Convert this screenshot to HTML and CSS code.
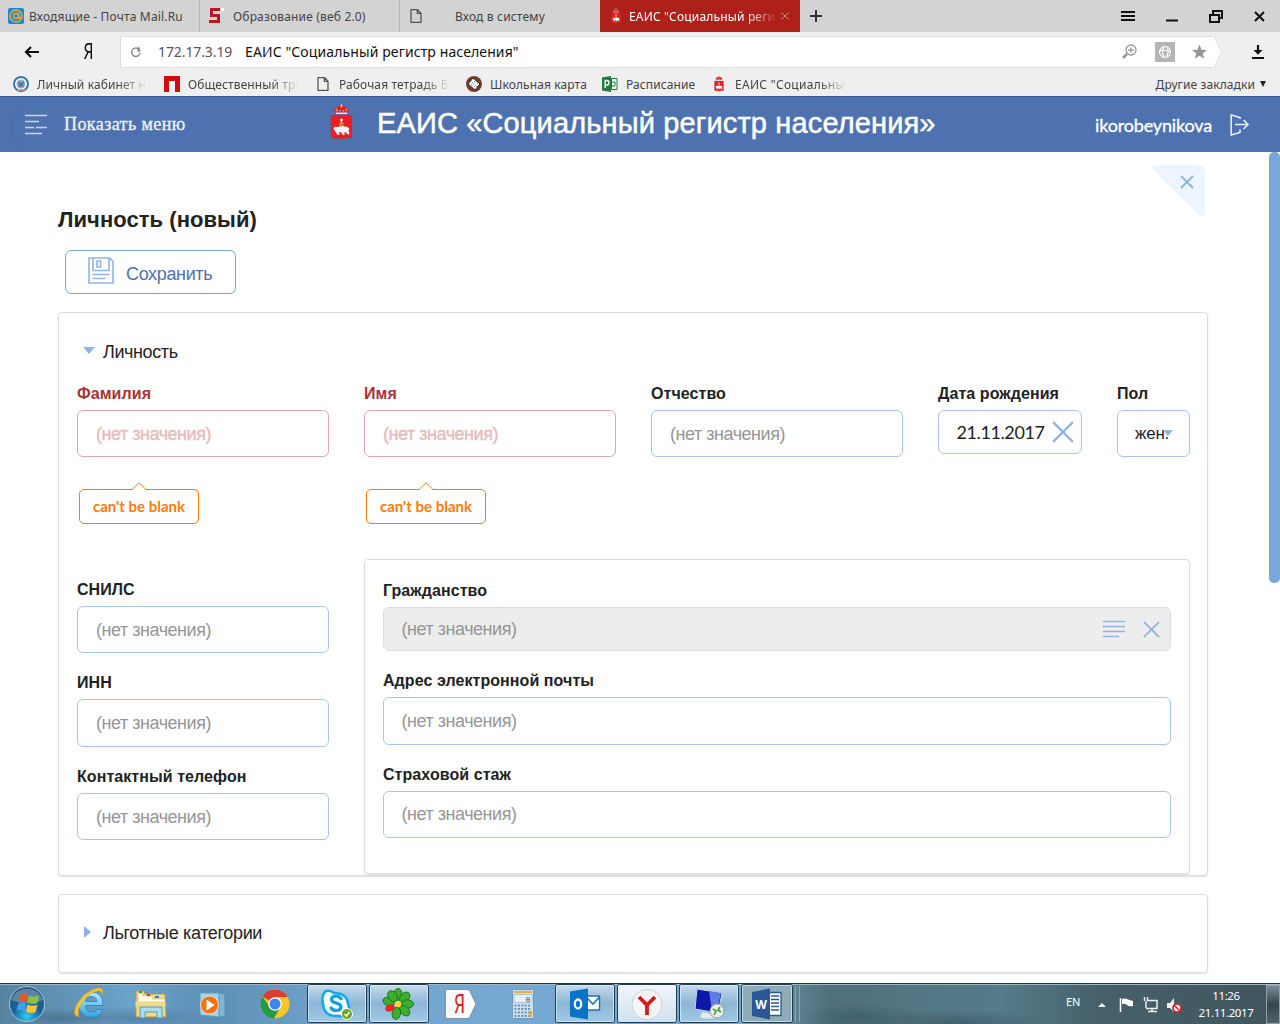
FILE: index.html
```html
<!DOCTYPE html>
<html lang="ru">
<head>
<meta charset="utf-8">
<title>ЕАИС "Социальный регистр населения"</title>
<link rel="stylesheet" href="styles.css">
</head>
<body>
<svg class="defs" width="0" height="0">
  <defs>
    <symbol id="crest" viewBox="0 0 24 36">
      <path d="M2 11h20v21q0 1-1 1h-7l-2 2-2-2H3q-1 0-1-1z" fill="#ec1c24" stroke="#b3373c" stroke-width=".7"/>
      <path d="M6 9 4.500 5 8 3l4-2 4 2 3.500 2L18 9z" fill="#cf2630"/>
      <path d="M12 0v4M10.500 1.500h3M6 5.500l2-1M18 5.500l-2-1" stroke="#eab64a" fill="none"/>
      <path d="M6.500 8.300h11v1.500h-11z" fill="#eee"/><path d="M7 6.500h10" stroke="#f3d7c8" stroke-dasharray="1.500 1.500"/>
      <path d="M10 18h4v4.500h-4z" fill="#c98b1e"/><path d="M12 14v4M10.500 15.500h3" stroke="#fff" stroke-width="1.200"/>
      <path d="M4 23.500q1.500-1.800 3.500-1.200 4-.8 8-.4 3 0 4 2l-.5 2 .8 3.600h-2.300l-1-2-2 .3.800 2h-2.500l-1-2.300h-2.300l.7 2.300H7.800l-1.500-2.500z" fill="#f7f7f7"/>
    </symbol>
    <symbol id="page" viewBox="0 0 12 14"><path d="M1 .7h6.500L11 4.200v9.100H1zM7.300.7v3.700H11" fill="none" stroke="#555" stroke-width="1.300"/></symbol>
    <symbol id="cross" viewBox="0 0 20 20"><path d="M1 1l18 18M19 1 1 19" fill="none" stroke="currentColor" stroke-width="2"/></symbol>
  </defs>
</svg>
<div class="screen">
  <nav class="tabs">
    <div class="tab"><svg class="fav" viewBox="0 0 16 16"><rect width="16" height="16" rx="2" fill="#1589e0"/><circle cx="8" cy="8" r="6" fill="none" stroke="#f6a623" stroke-width="1.600"/><circle cx="8" cy="8" r="2.600" fill="none" stroke="#f6a623" stroke-width="1.600"/><path d="M10.600 5v4.500q1.500 1.500 2.800-.5" fill="none" stroke="#f6a623" stroke-width="1.400"/></svg><span class="t-mail">Входящие - Почта Mail.Ru</span></div>
    <div class="tab"><svg class="fav" viewBox="0 0 16 16"><path d="M2 0h10v3H5v3h7v9H1v-3h8V9H2z" fill="#b3191f"/><path d="M13 0h3v3h-3z" fill="#fff"/></svg><span class="t-edu">Образование (веб 2.0)</span></div>
    <div class="tab"><svg class="fav pg"><use href="#page"/></svg><span class="t-login">Вход в систему</span></div>
    <div class="tab active"><svg class="fav crest-s"><use href="#crest"/></svg><span class="t-eais fade">ЕАИС "Социальный реги</span><svg class="tx"><use href="#cross"/></svg></div>
    <svg class="plus" viewBox="0 0 12 12"><path d="M6 0v12M0 6h12" stroke="#333" stroke-width="2"/></svg>
    <svg class="winctl" viewBox="0 0 142 16"><g fill="none" stroke="#111" stroke-width="2"><path d="M0 4h14M0 8h14M0 12h14"/><path d="M45 12.500h12"/><path d="M89 7h9v7h-9zM92 6V3h9v7h-3"/><path d="M134 4l9 9M143 4l-9 9"/></g></svg>
  </nav>
  <div class="address">
    <svg class="back" viewBox="0 0 15 12"><path d="M15 6H2M7 1 2 6l5 5" fill="none" stroke="#111" stroke-width="2.200"/></svg>
    <span class="ya">Я</span>
    <div class="urlbox">
      <svg class="reload" viewBox="0 0 12 12"><path d="M8.500 3A4.200 4.200 0 1 0 10 7" fill="none" stroke="#888" stroke-width="1.400"/><path d="M7 5.500h4L8.500 0z" fill="#888"/></svg>
      <span class="ip">172.17.3.19</span><span class="ttl">ЕАИС "Социальный регистр населения"</span>
      <svg class="urlicons" viewBox="0 0 86 22"><g fill="none" stroke="#999" stroke-width="1.300"><circle cx="9" cy="9" r="5"/><path d="M6.200 9h5.600M9 6.200v5.600"/><path d="M5 13l-4 4" stroke-width="2.500"/></g><rect x="33" y="1" width="20" height="20" fill="#b5b5b5"/><g fill="none" stroke="#fff" stroke-width="1.100"><circle cx="43" cy="11" r="5.500"/><path d="M37.500 10q5-2 11 1M42 5.500q-3 5 0 11M45 6q3 5-1 10"/></g><path d="M77.500 3.500l2 5.300 5.500.2-4.300 3.500 1.500 5.300-4.700-3-4.700 3 1.500-5.300L70 9l5.500-.2z" fill="#959595"/></svg>
    </div>
    <svg class="urltip" viewBox="0 0 10 32"><path d="M0 0h1l8 16-8 16H0z" fill="#fff"/><path d="M1 .5 8.500 16 1 31.500" fill="none" stroke="#ddd"/></svg>
    <svg class="down" viewBox="0 0 12 14"><path d="M6 0v6" stroke="#111" stroke-width="2.200"/><path d="M1.500 5h9L6 9.800zM0 12h12v2H0z" fill="#111"/></svg>
  </div>
  <div class="marks">
    <div class="mk m1"><svg class="fav" viewBox="0 0 16 16"><circle cx="8" cy="8" r="7" fill="#fff" stroke="#3974ad" stroke-width="2"/><circle cx="8" cy="8" r="4.500" fill="#91aecb"/><path d="M5 5l3 2 3-2-1 6H6z" fill="#55779c"/><path d="M4 14h8" stroke="#d88" stroke-width="1.500"/></svg><span class="fade">Личный кабинет н</span></div>
    <div class="mk m2"><svg class="fav" viewBox="0 0 16 16"><path d="M0 0h16v16h-5V5H5v11H0z" fill="#d00d12"/></svg><span class="fade">Общественный тра</span></div>
    <div class="mk m3"><svg class="fav pg"><use href="#page"/></svg><span class="fade">Рабочая тетрадь Би</span></div>
    <div class="mk m4"><svg class="fav" viewBox="0 0 16 16"><circle cx="8" cy="8" r="8" fill="#7b3b31"/><path d="M7 2l7 6-5 6-7-6z" fill="#fff" stroke="#222"/><path d="M6 6l5 5M5 8l4 3M8 5l4 3" stroke="#555" stroke-width=".8" stroke-dasharray="1 1"/></svg><span>Школьная карта</span></div>
    <div class="mk m5"><svg class="fav" viewBox="0 0 16 16"><path d="M0 1.500 9 0v16l-9-1.500z" fill="#217a3a"/><path d="M9.500 2.500h5.500v11H9.500zM10 6h3v4h-3" fill="#fff" stroke="#217a3a"/><path d="M3.200 12V4.500H5q2 0 2 2.200T5 9H3.200" fill="none" stroke="#fff" stroke-width="1.400"/></svg><span>Расписание</span></div>
    <div class="mk m6"><svg class="fav crest-s"><use href="#crest"/></svg><span class="fade">ЕАИС "Социальны</span></div>
    <div class="mk m7"><span>Другие закладки</span><i class="tri"></i></div>
  </div>
  <header class="top">
    <svg class="burger" viewBox="0 0 40 40"><path d="M14 1Q1 9 1 20t13 19" fill="none" stroke="#476aa6"/><g stroke="#c9d5ea" stroke-width="1.500"><path d="M15 9.500h22M15 15.500h14M15 21.500h9M26 21.500h11M15 27.500h17"/></g></svg>
    <span class="show">Показать меню</span>
    <svg class="crest"><use href="#crest"/></svg>
    <h1>ЕАИС «Социальный регистр населения»</h1>
    <span class="user">ikorobeynikova</span>
    <svg class="exit" viewBox="0 0 20 22"><path d="M10 5V3.500L1.200 1v20L10 18.500V15.500M5 10.500h13M13.500 6l4.500 4.500-4.500 4.500" fill="none" stroke="#e8eefa" stroke-width="1.600"/></svg>
  </header>
  <main class="content">
    <svg class="corner" viewBox="0 0 54 52"><path d="M3 0h42q8 0 8 8v40q-1 5-5 3L1 5Q-1 1 3 0z" fill="#eff5fe"/><path d="M29 11l12 12M41 11 29 23" stroke="#8db4e2" stroke-width="1.800"/></svg>
    <div class="scroll"></div>
    <h2>Личность (новый)</h2>
    <button class="save"><svg viewBox="0 0 26 27"><g fill="none" stroke="#8fb5e2" stroke-width="1.600"><path d="M1 1h20.500L25 4.500V26H1zM5 1v12.500h16V1M9 4h3.500v6H9zM4.500 17.500h17M4.500 21.500h13"/></g></svg><span>Сохранить</span></button>
    <section class="card person">
      <div class="chead"><i class="open"></i><span>Личность</span></div>
      <div class="row1">
        <div class="field bad w252"><label>Фамилия</label><div class="inp"><span>(нет значения)</span></div><div class="tip"><svg viewBox="0 0 14 8"><path d="M0 8 7 1l7 7z" fill="#fff"/><path d="M0 7.500 7 .8l7 6.700" fill="none" stroke="#ff7b0a"/></svg><span>can't be blank</span></div></div>
        <div class="field bad w252"><label>Имя</label><div class="inp"><span>(нет значения)</span></div><div class="tip"><svg viewBox="0 0 14 8"><path d="M0 8 7 1l7 7z" fill="#fff"/><path d="M0 7.500 7 .8l7 6.700" fill="none" stroke="#ff7b0a"/></svg><span>can't be blank</span></div></div>
        <div class="field w252"><label>Отчество</label><div class="inp"><span>(нет значения)</span></div></div>
        <div class="field date"><label>Дата рождения</label><div class="inp"><span>21.11.2017</span><svg><use href="#cross"/></svg></div></div>
        <div class="field sex"><label>Пол</label><div class="inp"><span>жен.</span><i class="open"></i></div></div>
      </div>
      <div class="row2">
        <div class="left">
          <div class="field"><label>СНИЛС</label><div class="inp"><span>(нет значения)</span></div></div>
          <div class="field"><label>ИНН</label><div class="inp inn"><span>(нет значения)</span></div></div>
          <div class="field"><label>Контактный телефон</label><div class="inp"><span>(нет значения)</span></div></div>
        </div>
        <div class="card inner">
          <div class="field"><label>Гражданство</label><div class="inp gray"><span>(нет значения)</span><svg class="lines" viewBox="0 0 22 18"><path d="M0 1.500h22M0 6.500h22M0 11.500h22M0 16.500h16" stroke="#8fb5e2" stroke-width="1.500"/></svg><svg class="x"><use href="#cross"/></svg></div></div>
          <div class="field f-mail"><label>Адрес электронной почты</label><div class="inp"><span>(нет значения)</span></div></div>
          <div class="field"><label>Страховой стаж</label><div class="inp"><span>(нет значения)</span></div></div>
        </div>
      </div>
    </section>
    <section class="card benefits"><i class="shut"></i><span>Льготные категории</span></section>
  </main>
  <footer class="task">
    <svg class="apps" viewBox="0 0 800 41">
      <defs>
        <radialGradient id="orb" cx=".5" cy=".85" r=".8"><stop offset="0" stop-color="#35c8f4"/><stop offset=".5" stop-color="#15629a"/><stop offset="1" stop-color="#2b587d"/></radialGradient>
        <linearGradient id="btn" x2="0" y2="1"><stop offset="0" stop-color="#c6dcec"/><stop offset=".5" stop-color="#8db6d6"/><stop offset="1" stop-color="#a1cae6"/></linearGradient>
        <linearGradient id="hot" x2="0" y2="1"><stop offset="0" stop-color="#f1f6fa"/><stop offset="1" stop-color="#cfe2f0"/></linearGradient>
        <linearGradient id="ie" x2="0" y2="1"><stop offset="0" stop-color="#b4ecfc"/><stop offset="1" stop-color="#2fa4e6"/></linearGradient>
      </defs>
      <circle cx="27" cy="21" r="17.500" fill="url(#orb)" stroke="#a9c8da"/><path d="M11 17a17 17 0 0 1 32 0q-16 7-32 0z" fill="#fff" opacity=".25"/>
      <path d="M20 12q4-3 8 0l-1.500 7q-4-2.500-8 0z" fill="#e4592a"/><path d="M29 12.500q5 2.500 10 0L37.500 20q-5 2-10-.5z" fill="#8fc43a"/><path d="M18 21q4-2.500 8 0l-1.500 7q-4-2.500-8 0z" fill="#3fa2e4"/><path d="M27.500 21.500q5 2.500 10 0L35.500 29q-5 2-9.500-.5z" fill="#fbc52e"/>
      <path d="M103 22.500H85.500q.5 6.500 6.500 6.500 3.500 0 5-2.500h5.800Q100 34.500 92 34.500 79 34 79 21.500 80 9 91.500 9 103.500 9.500 103 22.500zM85.500 18.500h11.500q-.5-5-5.700-5t-5.800 5z" fill="url(#ie)" fill-rule="evenodd" stroke="#2583bb" stroke-width=".8"/><path d="M79 34q-7-1-3-11 5-10 14-15t12-2q2 2 0 6 0-5-4-4-7 1-14 9-8 11-5 17z" fill="#f5c431" stroke="#c9941c" stroke-width=".4"/>
      <path d="M136 8h8l1 3h20l1 23h-30z" fill="#f2d985" stroke="#b99743"/><path d="M138 10h4l1 3h9l1 3h12v3h-27z" fill="#fffbea" stroke="#c5aa61" stroke-width=".5"/><path d="M139 8h3v2h-3z" fill="#25a12a"/><path d="M147 11h3v2h-3z" fill="#d13c28"/><path d="M155 13h4v2h-4z" fill="#178ad3"/><path d="M135.500 19h30v5h-30z" fill="#f2d985"/><path d="M140 35V24h22v11h-5v-6h-12v6z" fill="#a9dcee" stroke="#4d9dbb"/>
      <path d="M214 10h6l5 1v22l-8 2z" fill="#7eb6d5" stroke="#4d8fb5"/><path d="M200 10h19v24l-19-2z" fill="#abd1e5" stroke="#5d9cbe"/><circle cx="209.500" cy="22" r="9" fill="#f17315" stroke="#eed9c8"/><path d="M206.500 16.500 214.500 22l-8 5.500z" fill="#fff"/>
      <circle cx="275" cy="21" r="14.500" fill="#f8c82b"/><path d="M275 21 262.400 13.500A14.500 14.500 0 0 1 287.600 14H275z" fill="#da3e30"/><path d="M262.400 13.500A14.500 14.500 0 0 0 274 35.500l6-11-8 2z" fill="#24994a"/><circle cx="275" cy="21" r="6.800" fill="#fff"/><circle cx="275" cy="21" r="5.500" fill="#4285f0"/>
      <g stroke="#233d50"><rect x="307.500" y="1.500" width="59" height="38" rx="2" fill="url(#btn)"/><rect x="369.500" y="1.500" width="59" height="38" rx="2" fill="url(#btn)"/><rect x="555.500" y="1.500" width="59" height="38" rx="2" fill="url(#btn)"/><rect x="617.500" y="1.500" width="59" height="38" rx="2" fill="url(#hot)"/><rect x="679.500" y="1.500" width="59" height="38" rx="2" fill="url(#btn)"/><rect x="741.500" y="1.500" width="51" height="38" rx="2" fill="#8fadb9"/></g>
      <g fill="none" stroke="#e2f0f8" opacity=".7"><rect x="308.500" y="2.500" width="57" height="36" rx="1"/><rect x="370.500" y="2.500" width="57" height="36" rx="1"/><rect x="556.500" y="2.500" width="57" height="36" rx="1"/><rect x="680.500" y="2.500" width="57" height="36" rx="1"/><rect x="742.500" y="2.500" width="49" height="36" rx="1"/><path d="M795.500 3v36M799.500 3v36" opacity=".5"/></g>
      <path d="M326 8q5-1 8 2 13 0 14 11 2 4 0 7-3 7-9 5-15 1-16-12-2-9 3-13z" fill="#f7fcff" stroke="#10a8ee" stroke-width="2.600"/><path d="M341.500 17q-1.500-4-5.500-4t-4.500 3.300q0 2.700 4.500 3.700t5 3.700q0 3.800-5 3.800-4 0-5.500-3.700" fill="none" stroke="#109fdf" stroke-width="3.200"/><circle cx="347" cy="31" r="5.500" fill="#6ea617" stroke="#fff"/><path d="M344.500 31l2 2 3-4" stroke="#fff" fill="none" stroke-width="1.500"/>
      <g fill="#3bb02c" stroke="#16631b" stroke-width=".8"><ellipse id="petal" cx="398" cy="11.500" rx="4.200" ry="6"/><use href="#petal" transform="rotate(45 398 21)"/><use href="#petal" transform="rotate(90 398 21)"/><use href="#petal" transform="rotate(135 398 21)"/><use href="#petal" transform="rotate(190 398 21)"/><use href="#petal" transform="rotate(285 398 21)"/><use href="#petal" transform="rotate(325 398 21)"/></g><ellipse cx="390" cy="25" rx="4.800" ry="3.500" fill="#e52720" transform="rotate(-20 390 25)"/><circle cx="398" cy="21" r="3.300" fill="#fcd532"/>
      <path d="M447 6.500h20q2 0 3 2L476 21l-6 12.500q-1 2-3 2h-20q-1.500 0-1.500-1.500V8q0-1.500 1.500-1.500z" fill="#fafafa" stroke="#8095a3"/>
      <rect x="512.500" y="6.500" width="21" height="29" rx="1" fill="#cfe2ef" stroke="#6c9abc"/><path d="M514 8h18v2h-18z" fill="#f1a845"/><path d="M514 11.500h18v8h-18z" fill="#e6eff4" stroke="#8ba8bc" stroke-width=".6"/><path d="M514.500 22.500h16M514.500 26h16M514.500 29.500h16M514.500 33h16" stroke="#688fae" stroke-width="2" stroke-dasharray="2 1.400"/><path d="M529 28h3v6h-3z" fill="#f2a434"/>
      <path d="M586 13h13.500v14H586z" fill="#fff" stroke="#2272b9" stroke-width="1.400"/><path d="M586 14l7 7 6.500-7" fill="none" stroke="#2272b9" stroke-width="1.600"/><path d="M570 8.500l18-3v31l-18-3z" fill="#0873c7"/><ellipse cx="578" cy="21" rx="3.200" ry="4.500" fill="none" stroke="#fff" stroke-width="2.300"/>
      <circle cx="647" cy="21.500" r="15" fill="#f4f4f4" stroke="#ccd1d5"/><path d="M639 14l8 8 8-8M647 22v10" fill="none" stroke="#d7191f" stroke-width="3.800"/>
      <path d="M702 29l10 2 2 4q-8 2-14-1z" fill="#e6e9eb"/><path d="M697 6l25 4-4 20-23-4z" fill="#0b18a8" stroke="#cad2e0"/><path d="M709 8l12 2-4 19-5-1z" fill="#5e7ee2"/><circle cx="717" cy="28" r="7" fill="#eceeed" stroke="#999"/><path d="M713 26l3 2-2 4M720 24l-2 3 3 2" stroke="#36a32d" stroke-width="1.600" fill="none"/>
      <path d="M768 9.500h13v23h-13z" fill="#fff" stroke="#2b5797" stroke-width="1.300"/><path d="M771 13h8M771 16.500h8M771 20h8M771 23.500h8M771 27h8" stroke="#2b5797" stroke-width="1.500"/><path d="M752 9l18-3.500v31L752 33z" fill="#2b5797"/>
      <text x="761" y="26" text-anchor="middle" fill="#fff" font-family="Open Sans, sans-serif" font-weight="700" font-size="12">W</text>
      <text x="459.500" y="30" text-anchor="middle" fill="#d61d23" font-family="Roboto, sans-serif" font-size="26" textLength="11" lengthAdjust="spacingAndGlyphs">Я</text>
      <text x="528" y="18.500" text-anchor="middle" fill="#345" font-family="Liberation Mono, monospace" font-size="8">0</text>
    </svg>
    <span class="en">EN</span>
    <svg class="tray" viewBox="0 0 90 20"><path d="M2 12l4-4 4 4z" fill="#eee"/><path d="M24.500 3v14" stroke="#fff" stroke-width="1.500"/><path d="M26 4q3-1 5 0t6 2v5q-4 1-6-1t-5-1z" fill="#fff"/><path d="M51 5.500h10v8H50M56 13v3M52 16.500h9M48.500 2v4M51.500 2v4M50 6v7" fill="none" stroke="#eee" stroke-width="1.500"/><path d="M71 8h3l4-5v14l-4-4h-3z" fill="#eee"/><circle cx="81" cy="13" r="4" fill="#fff" stroke="#e4202c" stroke-width="1.700"/><path d="M78 10l6 6" stroke="#e4202c" stroke-width="1.600"/></svg>
    <div class="clock"><span>11:26</span><span>21.11.2017</span></div>
    <div class="peek"></div>
  </footer>
</div>
</body>
</html>
```
FILE: styles.css
```css
* { box-sizing: border-box; }
body { margin: 0; font-family: "Liberation Sans", Arial, sans-serif; color: #222; overflow: hidden; }
.defs { position: absolute; }
.screen { width: 1280px; height: 1024px; display: flex; flex-direction: column; background: #fff; white-space: nowrap; }
svg { display: block; flex: none; }
.tabs, .address, .marks, .task { font-family: "Noto Sans", "Open Sans", sans-serif; font-size: 12px; color: #444; }

.tabs { height: 32px; background: #d3d3d3; display: flex; align-items: center; flex: none; }
.tab { width: 200px; height: 32px; display: flex; align-items: center; padding-left: 8px; border-right: 1px solid #b5b5b5; }
.tab span { margin-left: 5px; letter-spacing: .17px; }
.tab:nth-child(3) { border-right: 0; }
.tab.active { background: #ae211b; color: #fff; border: 0; }
.fav { width: 16px; height: 16px; }
.fav.pg { width: 16px; height: 14px; }
.tab .t-edu { margin-left: 9px; }
.tab .t-login { margin-left: 31px; }
.tab .t-eais { margin-left: 5px; width: 148px; overflow: hidden; }
.fade { -webkit-mask-image: linear-gradient(90deg, #000 calc(100% - 28px), transparent); mask-image: linear-gradient(90deg, #000 calc(100% - 28px), transparent); overflow: hidden; }
.tx { width: 8px; height: 8px; margin-left: 4px; color: #e0a4a1; }
.plus { width: 12px; height: 12px; margin-left: 10px; }
.winctl { width: 142px; height: 16px; margin-left: auto; margin-right: 17px; overflow: visible; }

.address { height: 40px; background: #efefef; display: flex; align-items: center; flex: none; }
.back { width: 15px; height: 12px; margin-left: 24px; }
.ya { width: 12px; margin: -3px 0 0 43px; font-size: 21px; color: #111; transform: scaleX(.75); }
.urlbox { width: 1093px; height: 32px; margin-left: 26px; background: #fff; border: 1px solid #ddd; border-right: 0; display: flex; align-items: center; }
.reload { width: 12px; height: 12px; margin-left: 9px; }
.ip { width: 75px; margin: -2px 0 0 16px; font-size: 14px; color: #555; letter-spacing: -.1px; }
.ttl { margin: -2px 0 0 12px; font-size: 14px; color: #111; letter-spacing: .11px; }
.urlicons { width: 86px; height: 22px; margin-left: auto; margin-right: 5px; }
.urltip { width: 10px; height: 32px; }
.down { width: 12px; height: 14px; margin-left: 29px; }

.marks { height: 24px; background: #efefef; display: flex; flex: none; align-items: center; }
.mk { display: flex; align-items: center; color: #444; }
.mk span { margin-left: 8px; letter-spacing: .1px; }
.m1 { width: 151px; padding-left: 13px; }
.m1 span { width: 110px; }
.m2 { width: 151px; padding-left: 13px; }
.m2 span { width: 111px; }
.m3 { width: 164px; padding-left: 13px; }
.m3 span { width: 111px; }
.m4 { width: 136px; }
.m5 { width: 109px; }
.m6 span { width: 112px; letter-spacing: .3px; }
.m7 { margin-left: auto; margin-right: 14px; }
.tri { border: 3.500px solid transparent; border-top: 6px solid #222; border-bottom: 0; margin-left: 5px; }

.top { height: 56px; flex: none; background: #4e72b0; border-top: 1px solid #3a568c; display: flex; align-items: center; color: #fff; }
.burger { width: 40px; height: 40px; margin-left: 10px; margin-top: 2px; }
.show { width: 265px; margin-left: 14px; font: 18px "Liberation Serif", serif; color: #eef2fa; letter-spacing: .42px; -webkit-text-stroke: .3px; }
.crest { width: 25px; height: 37px; margin-top: -4px; }
h1 { margin: -3px 0 0 23px; width: 560px; font-weight: 400; font-size: 29px; letter-spacing: .14px; -webkit-text-stroke: .5px; }
.user { margin-left: 158px; width: 118px; font: 18px Lato, sans-serif; letter-spacing: -.15px; -webkit-text-stroke: .3px; }
.exit { width: 20px; height: 22px; margin-left: 17px; }

.content { flex: 1; position: relative; min-height: 0; padding: 55px 0 0 58px; }
.corner { position: absolute; left: 1152px; top: 13px; width: 54px; height: 52px; }
.scroll { position: absolute; right: 0; top: 0; width: 11px; height: 431px; border-radius: 5px; background: #7aa6d9; }
h2 { margin: 0; height: 25px; line-height: 25px; font-size: 22px; letter-spacing: .05px; }
.save { margin: 18px 0 0 7px; width: 171px; height: 44px; padding: 0 0 0 22px; display: flex; align-items: center; background: #fff; border: 1px solid #7ba6dc; border-radius: 6px; font: 18px "Liberation Sans", Arial, sans-serif; color: #4e72b0; }
.save svg { width: 26px; height: 27px; margin-top: -3px; }
.save span { margin: 4px 0 0 12px; letter-spacing: -.35px; }
.card { border: 1px solid #dcdcdc; border-radius: 4px; box-shadow: 0 1px 2px rgba(0,0,0,.12); background: #fff; }
.person { margin-top: 18px; width: 1150px; height: 564px; padding: 27px 17px 0 18px; }
.chead { display: flex; align-items: center; height: 24px; margin-left: 6px; font-size: 18px; letter-spacing: -.4px; }
.open { border: 6px solid transparent; border-top: 7px solid #8db4e2; border-bottom: 0; }
.chead .open { margin: -4px 8px 0 0; }
.row1 { display: flex; margin-top: 20px; height: 163px; }
.field label { display: block; height: 26px; padding-top: 1px; line-height: 18px; font-size: 16px; font-weight: 700; letter-spacing: .07px; }
.bad label { color: #a33; }
.w252 { width: 252px; margin-right: 35px; }
.inp { height: 47px; border: 1px solid #a9c6e9; border-radius: 6px; display: flex; align-items: center; padding: 1px 0 0 18px; color: #969696; font-size: 18px; }
.inp span { letter-spacing: -.47px; }
.bad .inp { border-color: #e0a9a9; color: #e6bcbc; -webkit-text-stroke: .4px; }
.tip { position: relative; width: 120px; height: 35px; margin: 32px 0 0 2px; border: 1px solid #ff7b0a; border-radius: 5px; display: flex; align-items: center; justify-content: center; padding-bottom: 2px; color: #ff7b0a; font: 700 15px Lato, sans-serif; }
.tip svg { position: absolute; left: 52px; top: -8px; width: 14px; height: 8px; }
.date { width: 144px; margin-right: 35px; }
.date .inp { height: 44px; padding: 0 0 0 17.500px; color: #222; font-family: Lato, sans-serif; }
.date .inp svg { width: 22px; height: 22px; color: #8db4e2; margin-left: 6px; }
.date .inp span { width: 89px; letter-spacing: -.4px; }
.sex { width: 73px; }
.sex .inp { color: #222; font-size: 17px; padding-left: 17px; }
.sex .inp span { letter-spacing: -.2px; }
.sex .open { margin: -3px 0 0 -6px; border-width: 5px; border-top-width: 6px; border-bottom: 0; }
.row2 { display: flex; margin-top: 12px; }
.left { width: 252px; padding-top: 21px; margin-right: 35px; }
.left .field { height: 93px; }
.left .field:nth-child(2) { height: 94px; }
.inn { height: 48px; }
.inner { width: 826px; height: 315px; padding: 21px 18px 0; }
.inner .field { height: 90px; }
.inner .f-mail { height: 94px; }
.inner .inp { padding: 0 0 0 17.500px; }
.f-mail .inp { height: 48px; }
.inner .field .gray { height: 44px; background: #ededed; border-color: #ddd; padding-right: 10px; }
.gray .lines { width: 22px; height: 18px; margin-left: auto; }
.gray .x { width: 17px; height: 17px; margin-left: 18px; color: #8db4e2; }
.benefits { width: 1150px; height: 79px; margin-top: 18px; display: flex; align-items: center; padding: 0 0 2px 25px; font-size: 18px; }
.benefits span { margin: 2px 0 0 12px; letter-spacing: -.35px; }
.shut { margin-top: -2px; border: 6px solid transparent; border-left: 7px solid #8db4e2; border-right: 0; }

.task { height: 41px; flex: none; display: flex; align-items: center; color: #fff; border-top: 1px solid #26343d; box-shadow: inset 0 1px #9fb6c2; background: radial-gradient(ellipse 50px 10px at 60px 34px, rgba(50,75,95,.4), transparent), radial-gradient(ellipse 70px 12px at 135px 34px, rgba(50,75,95,.35), transparent), radial-gradient(ellipse 60px 14px at 860px 34px, rgba(40,60,75,.35), transparent), radial-gradient(ellipse 90px 12px at 960px 38px, rgba(40,60,75,.4), transparent), linear-gradient(90deg, #5783a0 0, #6ba3cd 130px, #5d8eb5 210px, #73a6cf 350px, #76aad4 740px, #5d8292 795px, #4e707a 830px, #557c8b 1000px, #466069 1100px, #40555e 1280px); }
.apps { width: 800px; height: 41px; margin-top: -2px; }
.en { margin-left: 266px; width: 30px; font-size: 11px; margin-top: -6px; }
.tray { width: 90px; height: 20px; margin-top: 2px; }
.clock { width: 56px; margin-left: 12px; display: flex; flex-direction: column; align-items: center; font-size: 11.500px; line-height: 17px; letter-spacing: -.4px; }
.peek { width: 14px; height: 39px; margin-left: auto; border: 1px solid #8fa0a8; background: linear-gradient(#7c8b91, #37464d 50%, #536169); }
```
